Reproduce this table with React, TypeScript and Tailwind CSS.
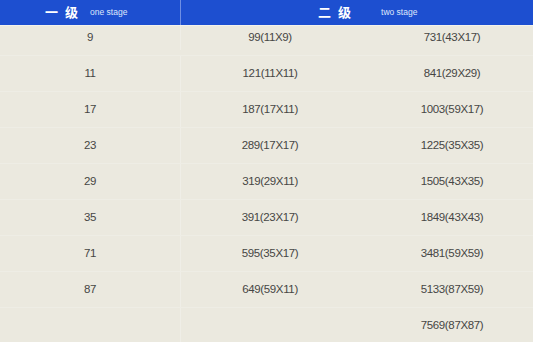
const rows: [string, string, string][] = [
  ['9', '99(11X9)', '731(43X17)'],
  ['11', '121(11X11)', '841(29X29)'],
  ['17', '187(17X11)', '1003(59X17)'],
  ['23', '289(17X17)', '1225(35X35)'],
  ['29', '319(29X11)', '1505(43X35)'],
  ['35', '391(23X17)', '1849(43X43)'],
  ['71', '595(35X17)', '3481(59X59)'],
  ['87', '649(59X11)', '5133(87X59)'],
  ['', '', '7569(87X87)'],
]

export default function App() {
  return (
    <div
      className="w-[533px] h-[342px] overflow-hidden bg-[#ebe9df] text-[#464644]"
      style={{ fontFamily: '"Liberation Sans", Arial, "Noto Sans CJK SC", sans-serif' }}
    >
      {/* header */}
      <div className="grid grid-cols-[181px_1fr] h-[26px] bg-[#1d4fd0] text-white border-b border-[#f3f2eb]">
        <div className="flex items-center pl-[45px] border-r border-[#6f8fe4]">
          <span className="text-[13px] font-bold flex gap-[7px]">
            <span>一</span>
            <span>级</span>
          </span>
          <span className="ml-[12px] text-[8.5px] text-[#dfe6fb]">one stage</span>
        </div>
        <div className="flex items-center pl-[137px]">
          <span className="text-[13px] font-bold flex gap-[7px]">
            <span>二</span>
            <span>级</span>
          </span>
          <span className="ml-[30px] text-[8.5px] text-[#dfe6fb]">two stage</span>
        </div>
      </div>

      {/* body */}
      {rows.map((r, i) => (
        <div
          key={i}
          className={
            'grid grid-cols-[181px_178px_1fr] text-[11.5px] tracking-[-0.35px] border-b border-[#eeede5] ' +
            (i === 0 ? 'h-[30px] pb-[5px]' : 'h-[36px]')
          }
        >
          <div className="flex items-center justify-center border-r border-[#efeee7]">{r[0]}</div>
          <div className="flex items-center justify-center">{r[1]}</div>
          <div className="flex items-center justify-center pl-3">{r[2]}</div>
        </div>
      ))}
    </div>
  )
}
